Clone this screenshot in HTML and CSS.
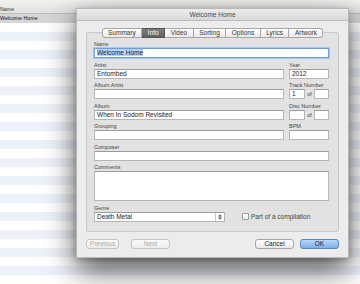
FILE: index.html
```html
<!DOCTYPE html>
<html>
	<head>
		<meta charset="UTF-8">
		<title>Welcome Home</title>
		<link rel="stylesheet" href="styles.css">
	</head>
	<body>
		<div class="list">
			<div class="list_head">Name</div>
			<div class="list_row selected">Welcome Home</div>
			<div class="list_rows"></div>
		</div>

		<div class="dialog">
			<div class="titlebar">Welcome Home</div>
			<div class="dialog_body">
				<div class="tabs">
					<span class="tab">Summary</span>
					<span class="tab active">Info</span>
					<span class="tab">Video</span>
					<span class="tab">Sorting</span>
					<span class="tab">Options</span>
					<span class="tab">Lyrics</span>
					<span class="tab">Artwork</span>
				</div>
				<div class="panel">
					<div class="grid">
						<div class="fld wide">
							<label>Name</label>
							<div class="input focus"><span class="sel">Welcome Home</span></div>
						</div>
						<div class="fld">
							<label>Artist</label>
							<div class="input">Entombed</div>
						</div>
						<div class="fld">
							<label>Year</label>
							<div class="input">2012</div>
						</div>
						<div class="fld">
							<label>Album Artist</label>
							<div class="input"></div>
						</div>
						<div class="fld">
							<label>Track Number</label>
							<div class="pair"><div class="input num">1</div><span>of</span><div class="input num2"></div></div>
						</div>
						<div class="fld">
							<label>Album</label>
							<div class="input">When In Sodom Revisited</div>
						</div>
						<div class="fld">
							<label>Disc Number</label>
							<div class="pair"><div class="input num"></div><span>of</span><div class="input num2"></div></div>
						</div>
						<div class="fld">
							<label>Grouping</label>
							<div class="input"></div>
						</div>
						<div class="fld">
							<label>BPM</label>
							<div class="input"></div>
						</div>
						<div class="fld wide">
							<label>Composer</label>
							<div class="input"></div>
						</div>
						<div class="fld wide">
							<label>Comments</label>
							<div class="input tall"></div>
						</div>
					</div>
					<div class="genre_row">
						<div class="fld genre">
							<label>Genre</label>
							<div class="input popup">
								<span class="popup_text">Death Metal</span>
								<span class="popup_btn">
									<svg width="4" height="6" viewBox="0 0 4 6"><path d="M0 2.5L2 0.5L4 2.5Z M0 3.5L2 5.5L4 3.5Z" fill="#444"/></svg>
								</span>
							</div>
						</div>
						<div class="check"><span class="box"></span>Part of a compilation</div>
					</div>
				</div>
				<div class="buttons">
					<span class="btn disabled prev">Previous</span>
					<span class="btn disabled next">Next</span>
					<span class="spacer"></span>
					<span class="btn cancel">Cancel</span>
					<span class="btn ok">OK</span>
				</div>
			</div>
		</div>
	</body>
</html>
```

FILE: styles.css
```css
*{
	margin: 0;
	padding: 0;
	box-sizing: content-box;
}
body{
	width: 360px;
	height: 284px;
	overflow: hidden;
	position: relative;
	background-color: #fff;
	font-family: "Liberation Sans", Arial, sans-serif;
	color: #111;
}
.list_head{
	height: 8px;
	padding-top: 5px;
	line-height: 8px;
	font-size: 5.3px;
	color: #333;
	border-bottom: 1px solid #bdbdbd;
	background: linear-gradient(#f2f2f0, #e0e0de);
}
.list_row{
	height: 9px;
	line-height: 9px;
	font-size: 5.3px;
}
.list_row.selected{
	background-color: #d6d6d6;
}
.list_rows{
	height: 261px;
	background: repeating-linear-gradient(#fff 0, #fff 9px, #edf2f9 9px, #edf2f9 18px);
}

/* dialog */
.dialog{
	position: absolute;
	left: 76px;
	top: 8px;
	width: 271px;
	border: 1px solid #b8b8b8;
	background-color: #ececec;
	box-shadow: 0 12px 28px rgba(0,0,0,.68), 0 2px 6px rgba(0,0,0,.2);
}
.titlebar{
	height: 11px;
	line-height: 11px;
	font-size: 6.5px;
	text-align: center;
	color: #4a4a4a;
	border-bottom: 1px solid #bcbcbc;
	background: linear-gradient(#ececec, #d8d8d8);
}
.dialog_body{
	padding: 7px 9px 8px;
}
.tabs{
	display: flex;
	justify-content: center;
	position: relative;
	z-index: 1;
	margin-bottom: -6px;
}
.tab{
	height: 8px;
	line-height: 8px;
	padding: 0 5.5px;
	font-size: 6.5px;
	color: #333;
	border: 1px solid #a6a6a6;
	border-left: none;
	background: linear-gradient(#ffffff, #e9e9e9);
}
.tab:first-child{
	border-left: 1px solid #a6a6a6;
	border-radius: 3px 0 0 3px;
}
.tab:last-child{
	border-radius: 0 3px 3px 0;
}
.tab.active{
	color: #fff;
	border-color: #555;
	background: linear-gradient(#7d7d7d, #626262);
}
.panel{
	border: 1px solid #c9c9c9;
	border-radius: 2px;
	background-color: #e2e2e2;
	padding: 8px 9px 9px 7px;
}
.grid{
	display: grid;
	grid-template-columns: 190px 40px;
	column-gap: 5px;
	row-gap: 3.5px;
}
.fld.wide{
	grid-column: 1 / 3;
}
.fld label{
	display: block;
	height: 7px;
	line-height: 7px;
	font-size: 5.5px;
	color: #444;
}
.input{
	height: 8px;
	line-height: 8px;
	padding: 0 2px;
	font-size: 6.5px;
	color: #222;
	background-color: #fff;
	border: 1px solid #b6b6b6;
	border-top-color: #9c9c9c;
	white-space: nowrap;
	overflow: hidden;
}
.input.focus{
	border-color: #6d9de0;
	box-shadow: 0 0 0 1px #a8c7f1;
}
.sel{
	background-color: #b4d3fb;
}
.input.tall{
	height: 28px;
}
.pair{
	display: flex;
	align-items: center;
	gap: 2px;
	font-size: 5.5px;
	color: #444;
}
.pair .input.num{
	width: 12px;
}
.pair .input.num2{
	width: 11px;
}
.genre_row{
	display: flex;
	align-items: flex-end;
	margin-top: 4px;
}
.genre{
	width: 131px;
}
.popup{
	display: flex;
	padding-right: 0;
}
.popup_text{
	flex: 1;
}
.popup_btn{
	width: 8px;
	display: flex;
	align-items: center;
	justify-content: center;
	border-left: 1px solid #c4c4c4;
}
.check{
	display: flex;
	align-items: center;
	margin: 0 0 2px 17px;
	font-size: 6.5px;
	line-height: 6px;
	color: #444;
}
.check .box{
	width: 5px;
	height: 5px;
	margin-right: 2px;
	border: 1px solid #9d9d9d;
	border-radius: 1px;
	background: linear-gradient(#fff, #ececec);
}
.buttons{
	display: flex;
	margin-top: 7px;
}
.spacer{
	flex: 1;
}
.btn{
	height: 8px;
	line-height: 8px;
	font-size: 6.5px;
	text-align: center;
	color: #222;
	border: 1px solid #a5a5a5;
	border-radius: 3px;
	background: linear-gradient(#ffffff, #e8e8e8);
}
.btn.disabled{
	color: #a9a9a9;
	border-color: #c4c4c4;
	background: linear-gradient(#fafafa, #ececec);
}
.btn.prev{
	width: 31px;
}
.btn.next{
	width: 37px;
	margin-left: 12px;
}
.btn.cancel{
	width: 37px;
}
.btn.ok{
	width: 37px;
	margin-left: 6px;
	border-color: #5b88c9;
	background: linear-gradient(#b8d6f7, #7db0ec);
}
```
